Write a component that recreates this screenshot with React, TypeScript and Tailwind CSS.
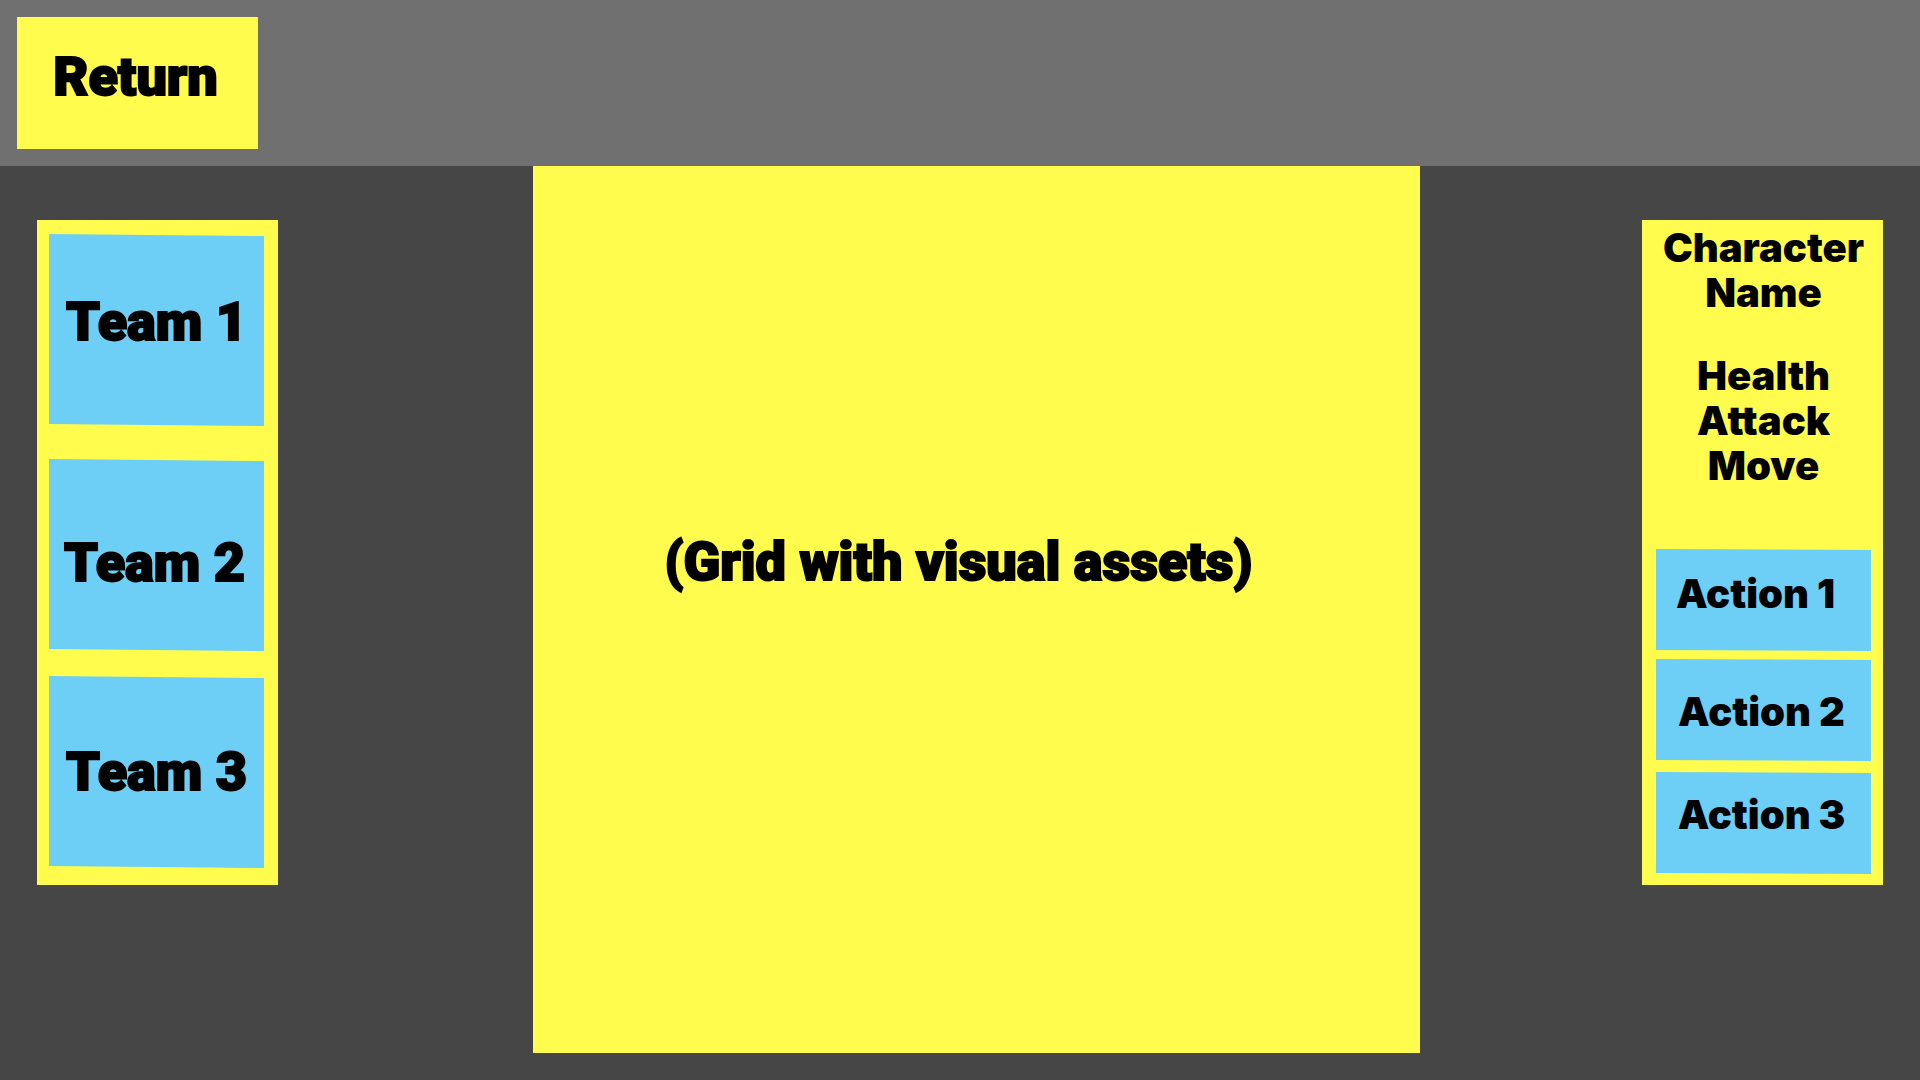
import { clsx } from 'clsx';

const displayText =
  "font-['Roboto',sans-serif] text-[54px] leading-none [-webkit-text-stroke:2px_black]";

const teams = [
  { label: 'Team 1', className: 'mb-[33px] pb-4' },
  { label: 'Team 2', className: 'mb-[25px] pr-1 pt-4' },
  { label: 'Team 3', className: '' },
];

const actions = [
  { label: 'Action 1', className: 'mb-2 pb-3 pr-4' },
  { label: 'Action 2', className: 'mb-[11px] pr-1 pt-1' },
  { label: 'Action 3', className: 'pr-1 pb-4' },
];

export default function App() {
  return (
    <div className="flex min-h-screen flex-col bg-[#464646] font-['Inter',sans-serif] font-black text-black">
      <header className="bg-[#707070] p-[17px]">
        <button
          type="button"
          className={clsx(
            'flex h-[132px] w-[241px] items-center justify-center bg-[#fffc4e] pr-1 pb-3',
            displayText,
          )}
        >
          Return
        </button>
      </header>

      <main className="flex flex-1 items-start px-[37px]">
        <nav
          aria-label="Teams"
          className="mt-[54px] flex w-[241px] shrink-0 flex-col bg-[#fffc4e] pt-[14px] pr-[14px] pb-[17px] pl-3"
        >
          {teams.map((team) => (
            <button
              key={team.label}
              type="button"
              className={clsx(
                'flex h-48 items-center justify-center bg-[#6dcff6] [clip-path:polygon(0_0,100%_2px,100%_100%,0_calc(100%-2px))]',
                displayText,
                team.className,
              )}
            >
              {team.label}
            </button>
          ))}
        </nav>

        <div className="flex flex-1 justify-center pl-[33px]">
          <section
            aria-label="Grid"
            className="flex aspect-square w-full max-w-[887px] items-center justify-center bg-[#fffc4e] pr-9 pb-24"
          >
            <p className={displayText}>(Grid with visual assets)</p>
          </section>
        </div>

        <aside className="mt-[54px] flex w-[241px] shrink-0 flex-col bg-[#fffc4e] pt-[5px] pr-3 pb-[11px] pl-[14px] text-[40px]">
          <h2 className="text-center leading-[45px]">
            Character
            <br />
            Name
          </h2>
          <ul className="mt-[38px] mb-[61px] text-center leading-[45px]">
            <li>Health</li>
            <li>Attack</li>
            <li>Move</li>
          </ul>
          {actions.map((action) => (
            <button
              key={action.label}
              type="button"
              className={clsx(
                'flex h-[102px] items-center justify-center bg-[#6dcff6] leading-none [clip-path:polygon(0_0,100%_1px,100%_100%,0_calc(100%-1px))]',
                action.className,
              )}
            >
              {action.label}
            </button>
          ))}
        </aside>
      </main>
    </div>
  );
}
